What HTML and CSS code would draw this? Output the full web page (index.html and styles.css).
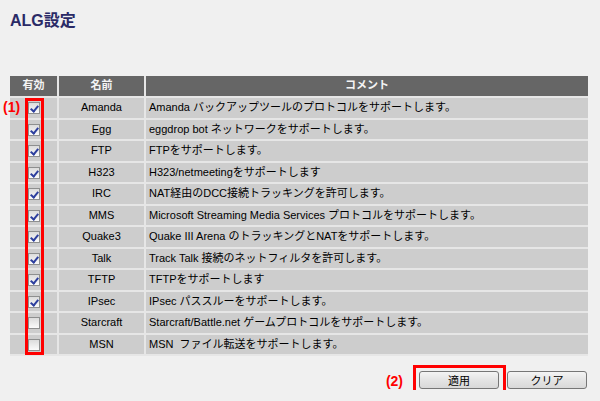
FILE: index.html
```html
<!DOCTYPE html>
<html>
<head>
	<meta charset="utf-8">
	<title>ALG設定</title>
	<link rel="stylesheet" href="styles.css">
</head>
<body>
	<div class="page">
		<h1 class="title">ALG設定</h1>
		<div class="tableWrap">
			<table class="algTable">
				<tr>
					<th class="colOn">有効</th>
					<th class="colName">名前</th>
					<th class="colNote">コメント</th>
				</tr>
				<tr><td class="center"><span class="cb on"></span></td><td class="center">Amanda</td><td>Amanda バックアップツールのプロトコルをサポートします。</td></tr>
				<tr><td class="center"><span class="cb on"></span></td><td class="center">Egg</td><td>eggdrop bot ネットワークをサポートします。</td></tr>
				<tr><td class="center"><span class="cb on"></span></td><td class="center">FTP</td><td>FTPをサポートします。</td></tr>
				<tr><td class="center"><span class="cb on"></span></td><td class="center">H323</td><td>H323/netmeetingをサポートします</td></tr>
				<tr><td class="center"><span class="cb on"></span></td><td class="center">IRC</td><td>NAT経由のDCC接続トラッキングを許可します。</td></tr>
				<tr><td class="center"><span class="cb on"></span></td><td class="center">MMS</td><td>Microsoft Streaming Media Services プロトコルをサポートします。</td></tr>
				<tr><td class="center"><span class="cb on"></span></td><td class="center">Quake3</td><td>Quake III Arena のトラッキングとNATをサポートします。</td></tr>
				<tr><td class="center"><span class="cb on"></span></td><td class="center">Talk</td><td>Track Talk 接続のネットフィルタを許可します。</td></tr>
				<tr><td class="center"><span class="cb on"></span></td><td class="center">TFTP</td><td>TFTPをサポートします</td></tr>
				<tr><td class="center"><span class="cb on"></span></td><td class="center">IPsec</td><td>IPsec パススルーをサポートします。</td></tr>
				<tr><td class="center"><span class="cb"></span></td><td class="center">Starcraft</td><td>Starcraft/Battle.net ゲームプロトコルをサポートします。</td></tr>
				<tr><td class="center"><span class="cb"></span></td><td class="center">MSN</td><td>MSN&nbsp; ファイル転送をサポートします。</td></tr>
			</table>
			<span class="note note1">(1)</span>
			<div class="mark1"></div>
		</div>
		<div class="actions">
			<span class="note">(2)</span>
			<span class="mark2"><button class="btn" type="button">適用</button></span>
			<button class="btn" type="button">クリア</button>
		</div>
	</div>
</body>
</html>
```
FILE: styles.css
```css
body{
	margin: 0;
	background-color: #f0f0f0;
	color: #000;
	font: 11px/1.2 "Liberation Sans", "Noto Sans CJK JP", sans-serif;
}
.page{
	padding: 12px 12px 0 10px;
}
.title{
	margin: 0;
	font-size: 16px;
	line-height: 18px;
	font-weight: bold;
	color: #2a2a66;
}

.tableWrap{
	position: relative;
	margin-top: 46px;
}
.algTable{
	width: 100%;
	border-collapse: separate;
	border-spacing: 0;
}
.algTable th,
.algTable td{
	padding: 0 3px;
	border-bottom: 2px solid #e6e6e6;
	border-right: 2px solid #e6e6e6;
}
.algTable th:last-child,
.algTable td:last-child{
	border-right: none;
}
.algTable th{
	height: 20px;
	background-color: #666;
	color: #f4f4f4;
	font-weight: bold;
	text-align: center;
}
.algTable td{
	height: 19.5px;
	background-color: #cdcdcd;
}
.colOn{
	width: 41px;
}
.colName{
	width: 79px;
}
.center{
	text-align: center;
}

/* チェックボックス */
.cb{
	display: inline-block;
	width: 12px;
	height: 12px;
	box-sizing: border-box;
	border: 1px solid #8e8f8f;
	background: linear-gradient(#dcdcdc, #fbfbfb);
	vertical-align: middle;
	position: relative;
}
.cb.on::after{
	content: "";
	position: absolute;
	left: 3px;
	top: 1px;
	width: 3px;
	height: 6px;
	border: solid #2d3f9e;
	border-width: 0 2px 2px 0;
	transform: rotate(40deg);
}

.note{
	color: #f00;
	font-weight: bold;
	font-size: 14px;
}
.note1{
	position: absolute;
	left: -7px;
	top: 23px;
}
.mark1{
	position: absolute;
	left: 15px;
	top: 22px;
	width: 19px;
	height: 257px;
	box-sizing: border-box;
	border: 3px solid #f00;
}

.actions{
	display: flex;
	justify-content: flex-end;
	align-items: center;
	gap: 8px;
	margin-top: 15px;
	padding-right: 1px;
}
.actions .note{
	margin-right: 8px;
	margin-top: 2px;
}
.mark2{
	position: relative;
	display: inline-block;
}
.mark2::after{
	content: "";
	position: absolute;
	left: -6px;
	right: -7px;
	top: -6px;
	bottom: -5px;
	border: 3px solid #f00;
}
.btn{
	display: block;
	width: 80px;
	height: 18px;
	padding: 0;
	border: 1px solid #767676;
	border-radius: 3px;
	background: linear-gradient(#f4f4f4, #e4e4e4 50%, #d8d8d8);
	font: 11px "Liberation Sans", "Noto Sans CJK JP", sans-serif;
	color: #000;
}
```
